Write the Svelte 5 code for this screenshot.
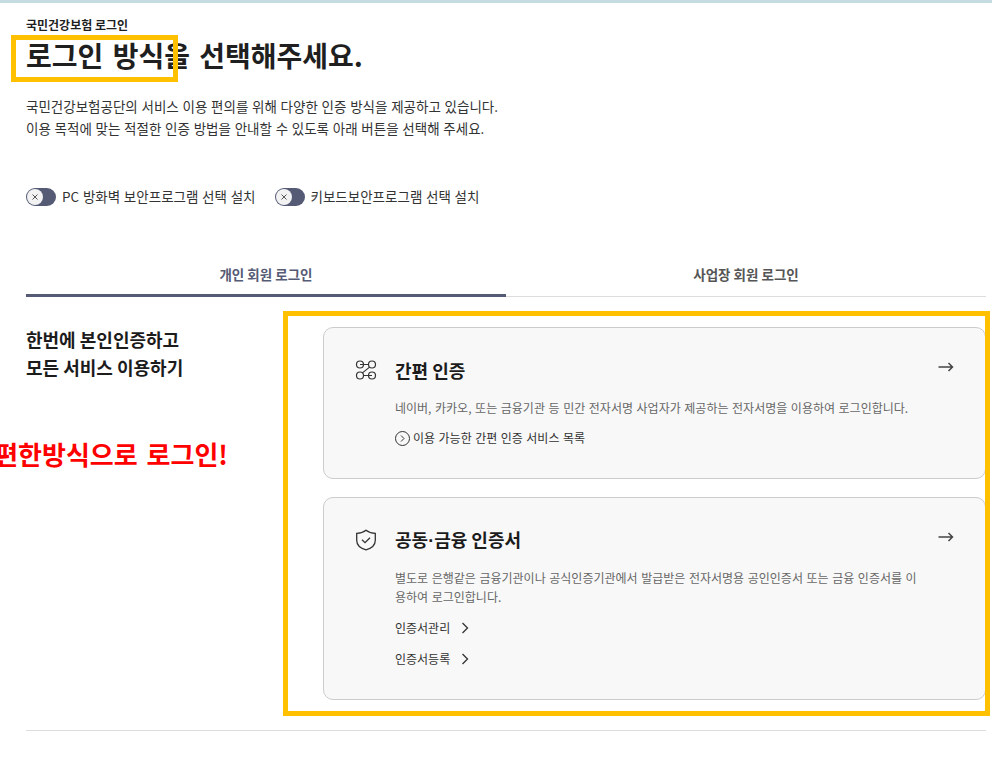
<script lang="ts">
  // Login method picker: heading, security toggles, tabs and two auth cards.
  const toggles = ['PC 방화벽 보안프로그램 선택 설치', '키보드보안프로그램 선택 설치'];
</script>

<div class="page">
  <div class="topbar"></div>
  <main class="wrap">
    <p class="eyebrow">국민건강보험 로그인</p>
    <h1>로그인 방식을 선택해주세요.</h1>
    <p class="intro">
      국민건강보험공단의 서비스 이용 편의를 위해 다양한 인증 방식을 제공하고 있습니다.<br />
      이용 목적에 맞는 적절한 인증 방법을 안내할 수 있도록 아래 버튼을 선택해 주세요.
    </p>

    <div class="toggles">
      {#each toggles as label}
        <div class="toggle">
          <span class="switch">
            <span class="knob">
              <svg width="8" height="8" viewBox="0 0 8 8"><path d="M1.5 1.5l5 5M6.5 1.5l-5 5" stroke="#555" stroke-width="1" fill="none" /></svg>
            </span>
          </span>
          <span>{label}</span>
        </div>
      {/each}
    </div>

    <div class="tabs">
      <div class="tab active">개인 회원 로그인</div>
      <div class="tab">사업장 회원 로그인</div>
    </div>

    <div class="body">
      <h2 class="side">한번에 본인인증하고<br />모든 서비스 이용하기</h2>
      <div class="cards">
        <section class="card first">
          <div class="card-head">
            <svg class="icon" width="24" height="24" viewBox="0 0 24 24" fill="none" stroke="#333" stroke-width="1.2">
              <circle cx="6" cy="6.500" r="3.500" />
              <circle cx="18" cy="6.500" r="3.500" />
              <circle cx="6" cy="17.500" r="3.500" />
              <circle cx="18" cy="17.500" r="3.500" />
              <path d="M6 6.500h8.500M9.500 17.500H18M15.600 9.100L8.400 14.900" />
            </svg>
            <h3>간편 인증</h3>
            <svg class="arrow" width="16" height="12" viewBox="0 0 16 12" fill="none" stroke="#444" stroke-width="1.5">
              <path d="M0.500 6h14M10.500 2l4 4-4 4" />
            </svg>
          </div>
          <p class="desc">네이버, 카카오, 또는 금융기관 등 민간 전자서명 사업자가 제공하는 전자서명을 이용하여 로그인합니다.</p>
          <div class="service">
            <svg width="15" height="15" viewBox="0 0 15 15" fill="none" stroke="#333" stroke-width="1">
              <circle cx="7.500" cy="7.500" r="7" />
              <path d="M6 4.500l3 3-3 3" />
            </svg>
            <span>이용 가능한 간편 인증 서비스 목록</span>
          </div>
        </section>

        <section class="card second">
          <div class="card-head">
            <svg class="icon" width="24" height="24" viewBox="0 0 24 24" fill="none" stroke="#333" stroke-width="1.3">
              <path d="M12 2.200c2.400 2 5.400 2.900 9.300 3.100v7c0 4.600-3.600 8-9.300 9.600-5.700-1.600-9.300-5-9.300-9.600v-7c3.900-.2 6.900-1.100 9.300-3.100z" />
              <path d="M8 11.800l3 2.900 5-5" />
            </svg>
            <h3>공동<span class="dot">·</span>금융 인증서</h3>
            <svg class="arrow" width="16" height="12" viewBox="0 0 16 12" fill="none" stroke="#444" stroke-width="1.5">
              <path d="M0.500 6h14M10.500 2l4 4-4 4" />
            </svg>
          </div>
          <p class="desc">별도로 은행같은 금융기관이나 공식인증기관에서 발급받은 전자서명용 공인인증서 또는 금융 인증서를 이용하여 로그인합니다.</p>
          <div class="link">
            <span>인증서관리</span>
            <svg width="9" height="12" viewBox="0 0 9 12" fill="none" stroke="#333" stroke-width="1.3"><path d="M1.500 1l5 5-5 5" /></svg>
          </div>
          <div class="link">
            <span>인증서등록</span>
            <svg width="9" height="12" viewBox="0 0 9 12" fill="none" stroke="#333" stroke-width="1.3"><path d="M1.500 1l5 5-5 5" /></svg>
          </div>
        </section>
      </div>
    </div>
    <div class="rule"></div>
  </main>

  <!-- annotations drawn on top of the captured page -->
  <div class="mark mark-title"></div>
  <div class="mark mark-cards"></div>
  <div class="callout">편한방식으로 로그인!</div>
</div>

<style>
  :global(body) {
    background: #fff;
  }
  .page {
    position: relative;
    width: 992px;
    height: 761px;
    overflow: hidden;
    font-family: "Noto Sans CJK KR", "Noto Sans", sans-serif;
    color: #1f1f1f;
  }
  .topbar {
    height: 3px;
    background: #c5dde1;
  }
  .wrap {
    padding: 0 6px 0 26px;
  }
  .eyebrow {
    margin: 13px 0 0;
    font-size: 12px;
    line-height: 18px;
    font-weight: 700;
  }
  h1 {
    margin: 0;
    font-size: 28px;
    line-height: 42px;
    font-weight: 700;
    word-spacing: 3px;
  }
  .intro {
    margin: 19px 0 0;
    font-size: 13.500px;
    line-height: 22px;
    font-weight: 400;
    color: #333;
    word-spacing: 0.700px;
  }
  .toggles {
    display: flex;
    gap: 19px;
    margin-top: 47px;
  }
  .toggle {
    display: flex;
    align-items: center;
    gap: 6px;
    font-size: 13.500px;
    line-height: 20px;
    color: #333;
    word-spacing: 0.700px;
  }
  .switch {
    display: flex;
    align-items: center;
    width: 30px;
    height: 18px;
    margin-top: 1px;
    border-radius: 9px;
    background: #555a75;
  }
  .knob {
    display: flex;
    align-items: center;
    justify-content: center;
    width: 16px;
    height: 16px;
    margin-left: 1px;
    border-radius: 50%;
    background: #f2f2f2;
  }
  .tabs {
    display: flex;
    margin-top: 44px;
    border-bottom: 1px solid #ddd;
  }
  .tab {
    flex: 1;
    height: 46px;
    text-align: center;
    font-size: 13.500px;
    line-height: 48px;
    font-weight: 700;
    color: #555;
  }
  .tab.active {
    height: 44px;
    margin-bottom: -1px;
    border-bottom: 3px solid #555a75;
    color: #555a75;
  }
  .body {
    display: flex;
    align-items: flex-start;
    margin-top: 30px;
  }
  .side {
    width: 297px;
    margin: -2px 0 0;
    flex: none;
    font-size: 18px;
    line-height: 28px;
    font-weight: 700;
    color: #1c1c1c;
  }
  .cards {
    flex: 1;
    display: flex;
    flex-direction: column;
    gap: 18px;
  }
  .card {
    box-sizing: border-box;
    padding: 24px 31px 0 71px;
    border: 1px solid #ccc;
    border-radius: 10px;
    background: #f8f8f8;
  }
  .card.first {
    height: 152px;
  }
  .card.second {
    height: 203px;
  }
  .card-head {
    position: relative;
    display: flex;
    align-items: center;
    height: 38px;
  }
  .icon {
    position: absolute;
    left: -41px;
    top: 6px;
  }
  .arrow {
    position: absolute;
    right: 0;
    top: 9px;
  }
  h3 {
    margin: -2px 0 0;
    font-size: 18px;
    line-height: 38px;
    font-weight: 700;
    color: #1c1c1c;
  }
  .dot {
    font-family: "Liberation Sans", sans-serif;
  }
  .desc {
    max-width: 525px;
    margin: 8px 0 0;
    font-size: 12px;
    line-height: 19px;
    color: #666;
    word-spacing: 0.900px;
    word-break: break-all;
  }
  .service {
    display: flex;
    align-items: center;
    gap: 3px;
    margin-top: 11px;
    font-size: 12px;
    line-height: 20px;
    color: #333;
    word-spacing: 0.800px;
  }
  .link {
    display: flex;
    align-items: center;
    gap: 11px;
    margin-top: 11px;
    font-size: 12px;
    line-height: 20px;
    color: #333;
  }
  .desc + .link {
    margin-top: 12px;
  }
  .rule {
    height: 1px;
    margin-top: 30px;
    background: #ddd;
  }
  .mark {
    position: absolute;
    box-sizing: border-box;
    border: 5px solid #ffc000;
    pointer-events: none;
  }
  .mark-title {
    left: 11px;
    top: 35px;
    width: 167px;
    height: 47px;
  }
  .mark-cards {
    left: 283px;
    top: 311px;
    width: 707px;
    height: 405px;
  }
  .callout {
    position: absolute;
    right: 764px;
    top: 436px;
    white-space: nowrap;
    font-size: 26px;
    line-height: 36px;
    font-weight: 700;
    word-spacing: 3px;
    color: #ff0000;
  }
</style>
